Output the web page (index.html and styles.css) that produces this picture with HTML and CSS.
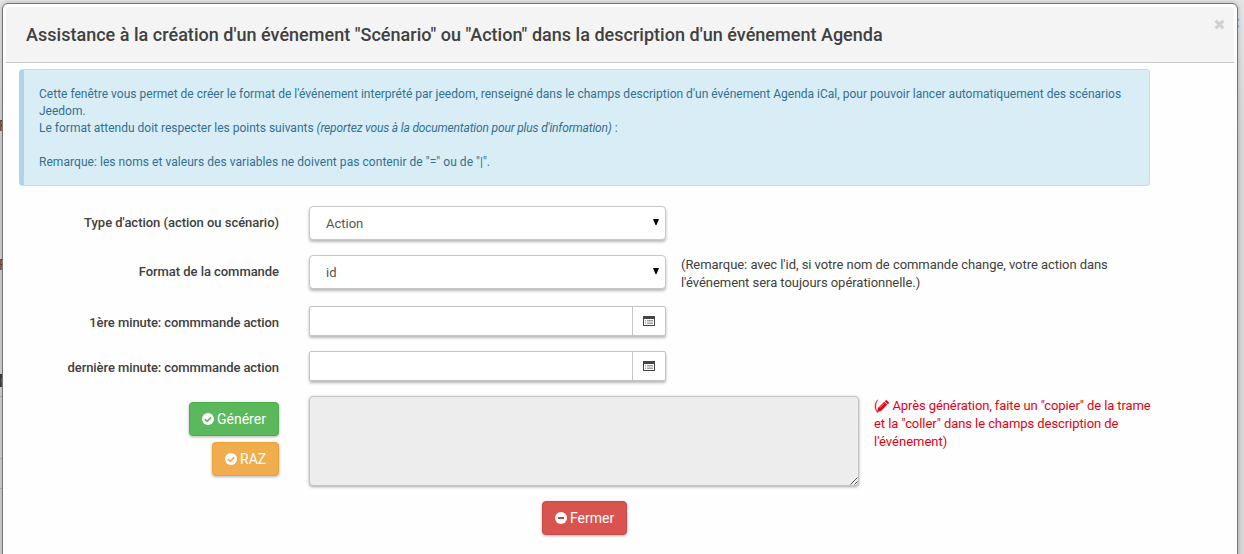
FILE: index.html
```html
<!DOCTYPE html>
<html lang="fr">
<head>
<meta charset="utf-8">
<title>Assistance Agenda</title>
<link rel="stylesheet" href="styles.css">
</head>
<body>
<div class="backdrop" aria-hidden="true">
  <span class="behind behind-a">F</span>
  <span class="behind behind-b">F</span>
  <span class="behind behind-c">M</span>
  <span class="behind-table"></span>
  <span class="behind behind-d">:</span>
</div>
<main class="dialog">
  <header class="dialog-head">
    <h1 class="dialog-title">Assistance à la création d'un événement "Scénario" ou "Action" dans la description d'un événement Agenda</h1>
    <svg class="close" viewBox="0 0 10 10"><path d="M1.5 1.5 8.5 8.5M8.5 1.5 1.5 8.5" fill="none" stroke="#d0d0d0" stroke-width="2.8"/></svg>
  </header>
  <div class="alert">
    <p class="line line-first">Cette fenêtre vous permet de créer le format de l'événement interprété par jeedom, renseigné dans le champs description d'un événement Agenda iCal, pour pouvoir lancer automatiquement des scénarios</p>
    <p class="line">Jeedom.</p>
    <p class="line line-format">Le format attendu doit respecter les points suivants <em>(reportez vous à la documentation pour plus d'information)</em> :</p>
    <p class="line line-remark">Remarque: les noms et valeurs des variables ne doivent pas contenir de "=" ou de "|".</p>
  </div>
  <form class="form">
    <div class="row row-select">
      <label class="label label-type">Type d'action (action ou scénario)</label>
      <div class="select"><span>Action</span><svg class="caret" viewBox="0 0 6 6"><path d="M0 0H6L3.5 6H2.5Z"/></svg></div>
    </div>
    <div class="row row-select">
      <label class="label label-format">Format de la commande</label>
      <div class="select"><span>id</span><svg class="caret" viewBox="0 0 6 6"><path d="M0 0H6L3.5 6H2.5Z"/></svg></div>
      <p class="note"><span class="note-a">(Remarque: avec l'id, si votre nom de commande change, votre action dans</span><br><span class="note-b">l'événement sera toujours opérationnelle.)</span></p>
    </div>
    <div class="row row-input">
      <label class="label label-minute">1ère minute: commmande action</label>
      <div class="group"><span class="input"></span><span class="addon"><svg class="list-icon" viewBox="0 0 12 10"><path d="M0 0H12V10H0ZM1 3V9H11V3Z" fill="#444" fill-rule="evenodd"/><path d="M2 4.5H3M4 4.5H10M2 6H3M4 6H10M2 7.5H3M4 7.5H10" stroke="#888" stroke-width=".8"/></svg></span></div>
    </div>
    <div class="row row-input">
      <label class="label label-minute">dernière minute: commmande action</label>
      <div class="group"><span class="input"></span><span class="addon"><svg class="list-icon" viewBox="0 0 12 10"><path d="M0 0H12V10H0ZM1 3V9H11V3Z" fill="#444" fill-rule="evenodd"/><path d="M2 4.5H3M4 4.5H10M2 6H3M4 6H10M2 7.5H3M4 7.5H10" stroke="#888" stroke-width=".8"/></svg></span></div>
    </div>
    <div class="row-result">
      <div class="actions">
        <div class="btn btn-green"><svg class="icon" viewBox="0 0 12 12"><circle cx="6" cy="6" r="6" fill="#fff"/><path d="M2.8 6.1 5.2 8.3 9.2 4.3" fill="none" stroke="#5cb85c" stroke-width="1.7"/></svg><span>Générer</span></div>
        <div class="btn btn-orange"><svg class="icon" viewBox="0 0 12 12"><circle cx="6" cy="6" r="6" fill="#fff"/><path d="M2.8 6.1 5.2 8.3 9.2 4.3" fill="none" stroke="#f0ad4e" stroke-width="1.7"/></svg><span>RAZ</span></div>
      </div>
      <div class="textarea"><svg class="grip" viewBox="0 0 8 8"><path d="M.5 7.5 7.5 .5M4.5 7.5 7.5 4.5" stroke="#555" fill="none"/></svg></div>
      <p class="warning"><span class="warn-a">(<svg class="pencil" viewBox="0 0 12 12"><path d="M0 12 1 8 7.2 1.8 10.2 4.8 4 11ZM7.8 1.2 8.6.4Q9.2-.2 9.9.4L11.6 2.1Q12.2 2.8 11.6 3.4L10.8 4.2Z" fill="#e60012"/><path d="M2.8 7.8 7.3 3.3" stroke="#fff" stroke-width=".5"/></svg> Après génération, faite un "copier" de la trame</span><br><span class="warn-b">et la "coller" dans le champs description de</span><br><span class="warn-c">l'événement)</span></p>
    </div>
    <div class="footer"><div class="btn btn-red"><svg class="icon" viewBox="0 0 12 12"><circle cx="6" cy="6" r="6" fill="#fff"/><path d="M3 6H9" stroke="#b94a48" stroke-width="2"/></svg><span>Fermer</span></div></div>
  </form>
</main>
</body>
</html>
```
FILE: styles.css
```css
* { box-sizing: border-box; }
body { margin: 0; height: 554px; padding: 3px 6px 0 2px; overflow: hidden; background: #d9d9d9; font-family: Roboto, sans-serif; font-size: 13px; color: #404040; }
p, h1 { margin: 0; font-weight: 400; }
svg { display: block; flex: none; }

.backdrop { position: absolute; inset: 0; overflow: hidden; background: linear-gradient(#e4e4e4, #d6d6d6 140px); }
.behind { position: absolute; left: -5px; font-size: 14px; line-height: 16px; }
.behind-a { top: 118px; }
.behind-b { top: 257px; }
.behind-c { top: 373px; left: -2px; font-size: 18px; font-weight: 700; }
.behind-a, .behind-b { left: -1px; }
.behind-d { top: 14px; left: 1236px; }
.behind-table { position: absolute; left: 0; top: 396px; width: 4px; height: 93px; border: solid #b5b5b5; border-width: 1px 0; background: linear-gradient(#b5b5b5, #b5b5b5) 0 61px / 100% 1px no-repeat; }

.dialog { position: relative; height: 570px; padding: 3px; background: #fefefe; border: 1px solid #777; border-radius: 6px; box-shadow: 0 0 4px rgba(0,0,0,.25); }
.dialog-head { display: flex; justify-content: space-between; height: 56px; padding: 0 9px 0 20px; background: #f4f4f4; border-bottom: 1px solid #c8c8c8; border-radius: 3px 3px 0 0; }
.dialog-title { font-size: 18px; line-height: 55px; font-weight: 500; letter-spacing: .022px; white-space: nowrap; }
.close { width: 11px; height: 11px; margin-top: 12px; }

.alert { width: 1131px; height: 117px; margin: 6px 0 0 13px; padding: 16px 0 0 15px; background: #d9edf7; border: 1px solid #bce0e8; border-left: 5px solid #b0d5ea; border-radius: 4px; color: #31708f; font-size: 12px; line-height: 17px; white-space: nowrap; }
.line-first { letter-spacing: .011px; }
.line em { letter-spacing: -.16px; }
.line-remark { margin-top: 17px; letter-spacing: .05px; }

.form { margin-top: 20px; }
.row { display: grid; grid-template-columns: 303px 357px 1fr; }
.label { padding-right: 30px; font-weight: 500; text-align: right; white-space: nowrap; }
.label-type { letter-spacing: -.03px; }
.label-format { letter-spacing: -.05px; }
.label-minute { letter-spacing: -.08px; }
.row-select { height: 49px; line-height: 18px; }
.row-select .label { padding-top: 8px; }
.select { display: flex; align-items: center; justify-content: space-between; height: 34px; padding: 1px 6px 0 16px; border: 1px solid #c8c8c8; border-radius: 4px; background: #fff; box-shadow: 0 2px 3px rgba(0,0,0,.28); color: #555; }
.caret { width: 6px; height: 6px; margin-top: -3px; }
.note { padding: 1px 0 0 15px; line-height: 18px; white-space: nowrap; }
.note-a { letter-spacing: -.05px; }
.note-b { letter-spacing: -.04px; }

.row-input { height: 45px; line-height: 18px; padding-top: 2px; }
.row-input .label { padding-top: 8px; }
.group { display: flex; height: 30px; border: 1px solid #c4c4c4; border-radius: 2px; background: #fff; box-shadow: 0 2px 3px rgba(0,0,0,.28); }
.input { flex: 1; }
.addon { display: flex; align-items: center; justify-content: center; width: 33px; border-left: 1px solid #c4c4c4; }
.list-icon { width: 12px; height: 10px; }

.row-result { display: grid; grid-template-columns: 303px 550px 1fr; height: 105px; padding-top: 2px; }
.actions { display: flex; flex-direction: column; align-items: flex-end; gap: 6px; padding: 6px 30px 0 0; }
.btn { display: flex; align-items: center; gap: 3px; height: 34px; padding: 0 12px; border: 1px solid; border-radius: 4px; color: #fff; font-size: 14px; line-height: 20px; box-shadow: 0 1px 3px rgba(0,0,0,.3); }
.icon { width: 12px; height: 12px; }
.btn-green { width: 90px; background: #5cb85c; border-color: #4cae4c; }
.btn-orange { width: 67px; background: #f0ad4e; border-color: #eea236; }
.btn-red { width: 85px; background: #d9534f; border-color: #c9484a; }
.textarea { display: flex; align-items: flex-end; justify-content: flex-end; height: 90px; border: 1px solid #c4c4c4; border-radius: 4px; background: #ededed; box-shadow: 0 1px 3px rgba(0,0,0,.35); }
.grip { width: 8px; height: 8px; }
.warning { padding: 1px 0 0 15px; line-height: 18px; color: #e60012; white-space: nowrap; }
.warn-a { letter-spacing: -.1px; }
.warn-b { letter-spacing: -.07px; }
.pencil { display: inline-block; width: 12px; height: 12px; margin-left: -1px; vertical-align: -2px; }
.footer { padding: 2px 0 0 536px; }
```
